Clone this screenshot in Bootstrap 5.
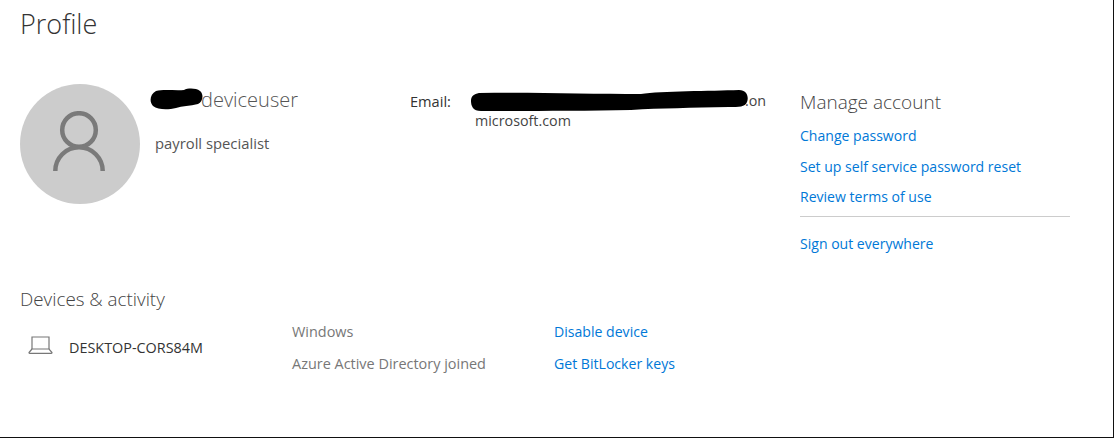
<!DOCTYPE html>
<html lang="en">
<head>
  <meta charset="UTF-8">
  <title>Profile</title>
  <meta name="viewport" content="width=device-width, initial-scale=1" />
  <link href="https://cdn.jsdelivr.net/npm/bootstrap@5.3.0/dist/css/bootstrap.min.css" rel="stylesheet" />
  <style>
    body {
      background-color: #fff;
      font-family: "Open Sans", "Liberation Sans", sans-serif;
      font-size: 14px;
      color: #444;
      overflow: hidden;
    }
    a {
      color: #0078d7;
      text-decoration: none;
    }
    .page-frame {
      height: 438px;
      padding: 6px 0 0 20px;
      border-right: 1px solid #111;
      border-bottom: 1px solid #111;
    }
    .page-title {
      font-size: 27px;
      font-weight: 300;
      line-height: 36px;
      color: #333;
      margin: 0 0 42px;
    }
    .avatar-circle {
      width: 120px;
      height: 120px;
      border-radius: 50%;
      background-color: #ccc;
    }
    .avatar-icon {
      margin: 0 2px 6px 0;
    }
    .profile-top {
      height: 203px;
    }
    .name-col {
      width: 270px;
      padding-left: 15px;
    }
    .user-name {
      font-size: 20px;
      font-weight: 300;
      line-height: 26px;
      margin: 3px 0 20px 46px;
      color: #555;
    }
    .user-role {
      font-size: 14.8px;
      line-height: 20px;
      color: #555;
    }
    .email-col {
      width: 390px;
      padding-top: 7px;
      line-height: 20px;
    }
    .email-label {
      width: 65px;
      font-size: 14.6px;
      color: #333;
    }
    .email-value {
      width: 291px;
      font-size: 14.3px;
      line-height: 20px;
      color: #444;
    }
    .email-first {
      text-align: right;
    }
    .scribble {
      position: absolute;
      fill: #000;
    }
    .scribble-name {
      left: 150px;
      top: 88px;
    }
    .scribble-email {
      left: 471px;
      top: 89px;
    }
    .manage-col {
      width: 270px;
    }
    .manage-title {
      font-size: 19px;
      font-weight: 300;
      line-height: 24px;
      margin: 6px 0 12px;
      color: #444;
    }
    .manage-link {
      font-size: 14.05px;
      line-height: 20px;
      margin-bottom: 10.5px;
    }
    .manage-rule {
      margin: -2px 0 17px;
      border-color: #ccc;
      opacity: 1;
    }
    .devices-title {
      font-size: 18.8px;
      font-weight: 300;
      line-height: 24px;
      margin: 0 0 11px;
      color: #444;
    }
    .device-name-col {
      width: 272px;
      padding-left: 8px;
      padding-top: 14px;
    }
    .device-icon {
      margin-bottom: 5px;
    }
    .device-label {
      font-size: 14.4px;
      color: #333;
    }
    .device-info-col {
      width: 262px;
      font-size: 14.45px;
      color: #777;
    }
    .device-line {
      line-height: 20px;
      margin-bottom: 12px;
    }
    .action-line {
      font-size: 14.1px;
    }
  </style>
</head>
<body>
<div class="page-frame position-relative">
  <h1 class="page-title">Profile</h1>

  <div class="profile-top d-flex">
    <div class="avatar-circle d-flex align-items-center justify-content-center flex-shrink-0">
      <svg class="avatar-icon" width="52" height="60" viewBox="0 0 52 60" fill="none" stroke="#7a7a7a" stroke-width="4.5">
        <circle cx="26" cy="19" r="16.8" />
        <path d="M2.3 60 A23.7 23.7 0 0 1 49.7 60" />
      </svg>
    </div>
    <div class="name-col flex-shrink-0">
      <div class="user-name">deviceuser</div>
      <div class="user-role">payroll specialist</div>
    </div>
    <div class="email-col d-flex flex-shrink-0">
      <div class="email-label">Email:</div>
      <div class="email-value">
        <div class="email-first">.on</div>
        <div>microsoft.com</div>
      </div>
    </div>
    <div class="manage-col flex-shrink-0">
      <div class="manage-title">Manage account</div>
      <div class="manage-link"><a href="#">Change password</a></div>
      <div class="manage-link"><a href="#">Set up self service password reset</a></div>
      <div class="manage-link"><a href="#">Review terms of use</a></div>
      <hr class="manage-rule">
      <div class="manage-link"><a href="#">Sign out everywhere</a></div>
    </div>
  </div>

  <div class="devices-title">Devices &amp; activity</div>
  <div class="d-flex">
    <div class="device-name-col d-flex align-items-center gap-3 align-self-start">
      <svg class="device-icon" width="25" height="18" viewBox="0 0 25 18" fill="none" stroke="#777" stroke-width="1.2">
        <path d="M4 13 V1 H21 V13" />
        <path d="M4 13 L1 16.5 C1 17 1.4 17.4 2 17.4 H23 C23.6 17.4 24 17 24 16.5 L21 13 Z" />
      </svg>
      <span class="device-label">DESKTOP-CORS84M</span>
    </div>
    <div class="device-info-col">
      <div class="device-line">Windows</div>
      <div class="device-line">Azure Active Directory joined</div>
    </div>
    <div class="action-line">
      <div class="device-line"><a href="#">Disable device</a></div>
      <div class="device-line"><a href="#">Get BitLocker keys</a></div>
    </div>
  </div>

  <!-- redaction marks from the original capture -->
  <svg class="scribble scribble-name" width="54" height="22" viewBox="0 0 54 22">
    <path d="M6 3 C14 1 26 3 34 2 C38 0 46 0 50 3 C54 6 53 14 48 16 C40 18 32 18 26 20 C18 22 8 22 3 18 C-1 14 0 6 6 3 Z" />
  </svg>
  <svg class="scribble scribble-email" width="278" height="24" viewBox="0 0 278 24">
    <path d="M8 4 C60 3 120 5 170 5 C190 2 240 2 268 1 C276 1 278 8 276 13 C274 18 268 18 258 18 C220 19 190 19 160 21 C110 22 50 22 10 22 C2 22 0 17 0 12 C0 7 3 5 8 4 Z" />
  </svg>
</div>

<script src="https://cdn.jsdelivr.net/npm/bootstrap@5.3.0/dist/js/bootstrap.bundle.min.js"></script>
</body>
</html>
